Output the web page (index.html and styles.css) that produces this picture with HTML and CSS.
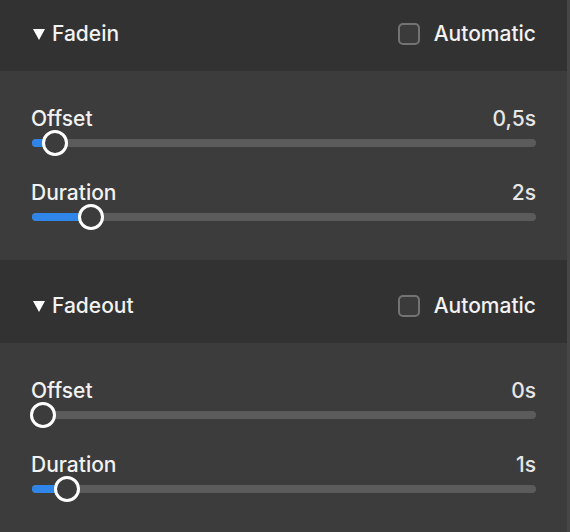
FILE: index.html
```html
<!DOCTYPE html>
<html lang="en">
<head>
    <meta charset="UTF-8"/>
    <title>Fade settings</title>
    <link rel="stylesheet" href="styles.css">
</head>
<body>
<div class="panel">
    <section class="group">
        <div class="group-header">
            <div class="group-title">
                <svg class="caret" width="12" height="11" viewBox="0 0 12 11"><polygon points="0,0 12,0 6,11" fill="#ffffff"/></svg>
                <span>Fadein</span>
            </div>
            <label class="check">
                <span class="box"></span>
                <span>Automatic</span>
            </label>
        </div>
        <div class="group-body">
            <div class="row">
                <div class="row-head"><span>Offset</span><span class="value">0,5s</span></div>
                <div class="slider">
                    <div class="track"></div>
                    <div class="fill" style="width: 23px"></div>
                    <div class="thumb" style="left: 10px"></div>
                </div>
            </div>
            <div class="row">
                <div class="row-head"><span>Duration</span><span class="value">2s</span></div>
                <div class="slider">
                    <div class="track"></div>
                    <div class="fill" style="width: 59px"></div>
                    <div class="thumb" style="left: 46px"></div>
                </div>
            </div>
        </div>
    </section>

    <section class="group">
        <div class="group-header">
            <div class="group-title">
                <svg class="caret" width="12" height="11" viewBox="0 0 12 11"><polygon points="0,0 12,0 6,11" fill="#ffffff"/></svg>
                <span>Fadeout</span>
            </div>
            <label class="check">
                <span class="box"></span>
                <span>Automatic</span>
            </label>
        </div>
        <div class="group-body">
            <div class="row">
                <div class="row-head"><span>Offset</span><span class="value">0s</span></div>
                <div class="slider">
                    <div class="track"></div>
                    <div class="fill" style="width: 0px"></div>
                    <div class="thumb" style="left: -2px"></div>
                </div>
            </div>
            <div class="row">
                <div class="row-head"><span>Duration</span><span class="value">1s</span></div>
                <div class="slider">
                    <div class="track"></div>
                    <div class="fill" style="width: 35px"></div>
                    <div class="thumb" style="left: 22px"></div>
                </div>
            </div>
        </div>
    </section>
</div>
</body>
</html>
```

FILE: styles.css
```css
html, body {
    margin: 0;
    height: 100%;
    overflow: hidden;
}

body {
    font-family: Inter, 'Noto Sans', sans-serif;
    font-weight: 500;
    background-color: #3c3c3c;
    color: #f2f2f2;
    border-right: 3px solid #464646;
    box-sizing: border-box;
}

.panel {
    margin-top: -12px;
}

.group-header {
    height: 83px;
    box-sizing: border-box;
    padding: 8px 31px 0 33px;
    display: flex;
    align-items: center;
    justify-content: space-between;
    background-color: #323232;
    font-size: 21px;
}

.group-title {
    display: flex;
    align-items: center;
    gap: 7px;
}

.caret {
    display: block;
    margin-top: 1px;
}

.check {
    display: flex;
    align-items: center;
    gap: 14px;
}

.box {
    width: 22px;
    height: 22px;
    box-sizing: border-box;
    border: 2px solid #737373;
    border-radius: 5px;
    background-color: #3b3b3b;
}

.group-body {
    height: 189px;
    box-sizing: border-box;
    padding: 35px 31px 0 31px;
    display: flex;
    flex-direction: column;
    gap: 24px;
}

.row-head {
    height: 24px;
    display: flex;
    align-items: center;
    justify-content: space-between;
    font-size: 21px;
}

.value {
    color: #e6e6e6;
}

.slider {
    position: relative;
    height: 26px;
    margin-left: 1px;
}

.track {
    position: absolute;
    left: 0;
    right: 0;
    top: 9px;
    height: 8px;
    border-radius: 4px;
    background-color: #5b5b5b;
}

.fill {
    position: absolute;
    left: 0;
    top: 9px;
    height: 8px;
    border-radius: 4px;
    background-color: #2f86e8;
}

.thumb {
    position: absolute;
    top: 0;
    width: 26px;
    height: 26px;
    box-sizing: border-box;
    border: 3px solid #ffffff;
    border-radius: 50%;
    background-color: #3c3c3c;
}
```
